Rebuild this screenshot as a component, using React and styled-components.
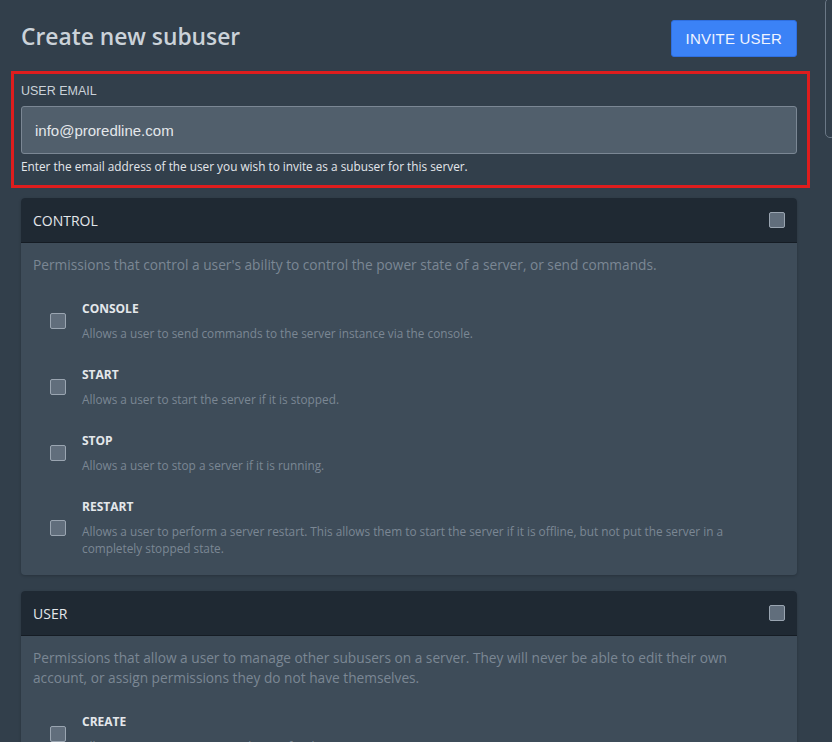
import React from 'react'
import styled, { createGlobalStyle } from 'styled-components'

const GlobalStyle = createGlobalStyle`
	html, body {
		margin: 0;
		padding: 0;
		background: #323f4b;
	}
	body {
		font-family: 'Open Sans', 'Liberation Sans', sans-serif;
		color: #e4e7eb;
	}
	* {
		box-sizing: border-box;
	}
`

const Page = styled.div`
	position: relative;
	min-height: 742px;
	padding: 20px 35px 0 21px;
	overflow: hidden;
`

const ScrollThumb = styled.div`
	position: absolute;
	top: -2px;
	right: -4px;
	width: 11px;
	height: 140px;
	border: 1px solid #6b7886;
	border-radius: 5px;
`

const TopBar = styled.div`
	display: flex;
	justify-content: space-between;
	align-items: flex-start;
`

const Title = styled.h2`
	margin: 1px 0 0;
	font-family: 'Open Sans', sans-serif;
	font-size: 22.8px;
	font-weight: 600;
	color: #cbd2d9;
`

const Button = styled.button`
	height: 37px;
	padding: 0 14px;
	background: #3b82f6;
	border: 1px solid #2f6fe0;
	border-radius: 3px;
	color: #f0f4ff;
	font-family: 'Liberation Sans', Arial, sans-serif;
	font-size: 15px;
	letter-spacing: 0.2px;
`

const Highlight = styled.div`
	margin: 14px -13px 0 -10px;
	padding: 10px 10px 11px 7px;
	border: 3px solid #df1d1d;
`

const Label = styled.label`
	display: block;
	font-family: 'Liberation Sans', Arial, sans-serif;
	font-size: 12.5px;
	color: #cbd2d9;
	margin-bottom: 8px;
`

const Input = styled.input`
	display: block;
	width: 100%;
	height: 48px;
	padding: 0 13px;
	background: #515f6c;
	border: 1px solid #7b8794;
	border-radius: 3px;
	color: #e4e7eb;
	font-family: 'Liberation Sans', Arial, sans-serif;
	font-size: 15px;
	outline: none;
`

const Help = styled.p`
	margin: 4px 0 0;
	font-size: 11.8px;
	color: #e4e7eb;
`

const Card = styled.section`
	margin-top: 10px;
	margin-bottom: 16px;
	border-radius: 4px;
	overflow: hidden;
	background: #3e4c59;
	box-shadow: 0 1px 3px rgba(0, 0, 0, 0.2);
`

const CardHeader = styled.div`
	display: flex;
	align-items: center;
	justify-content: space-between;
	height: 45px;
	padding: 0 12px;
	background: #1f2933;
	border-bottom: 1px solid #151c24;
	font-size: 14px;
	color: #e4e7eb;
`

const CardBody = styled.div`
	padding: 12px 12px 18px;
`

const CardDescription = styled.p`
	margin: 0 40px 25px 0;
	font-size: 13.7px;
	line-height: 20px;
	color: #7b8794;
`

const Checkbox = styled.span`
	display: block;
	flex: none;
	width: 16px;
	height: 16px;
	background: #616e7c;
	border: 1px solid #9aa5b1;
	border-radius: 2px;
`

const Item = styled.div`
	display: flex;
	align-items: center;
	gap: 16px;
	padding: 0 5px 0 17px;
	margin-bottom: 24px;

	&:last-child {
		margin-bottom: 0;
	}
`

const ItemText = styled.div`
	display: flex;
	flex-direction: column;
	gap: 8px;
`

const ItemTitle = styled.span`
	font-size: 12px;
	line-height: 17px;
	font-weight: 700;
	color: #e4e7eb;
`

const ItemDescription = styled.span`
	font-size: 11.8px;
	line-height: 17px;
	color: #7b8794;
`

const groups = [
	{
		name: 'CONTROL',
		description:
			"Permissions that control a user's ability to control the power state of a server, or send commands.",
		items: [
			['CONSOLE', 'Allows a user to send commands to the server instance via the console.'],
			['START', 'Allows a user to start the server if it is stopped.'],
			['STOP', 'Allows a user to stop a server if it is running.'],
			[
				'RESTART',
				'Allows a user to perform a server restart. This allows them to start the server if it is offline, but not put the server in a completely stopped state.'
			]
		]
	},
	{
		name: 'USER',
		description:
			'Permissions that allow a user to manage other subusers on a server. They will never be able to edit their own account, or assign permissions they do not have themselves.',
		items: [['CREATE', 'Allows a user to create new subusers for the server.']]
	}
]

export default function App() {
	return (
		<>
			<GlobalStyle />
			<Page>
				<ScrollThumb />
				<TopBar>
					<Title>Create new subuser</Title>
					<Button>INVITE USER</Button>
				</TopBar>
				<Highlight>
					<Label>USER EMAIL</Label>
					<Input defaultValue="info@proredline.com" />
					<Help>
						Enter the email address of the user you wish to invite as a subuser for this server.
					</Help>
				</Highlight>
				{groups.map(group => (
					<Card key={group.name}>
						<CardHeader>
							{group.name}
							<Checkbox />
						</CardHeader>
						<CardBody>
							<CardDescription>{group.description}</CardDescription>
							{group.items.map(([title, text]) => (
								<Item key={title}>
									<Checkbox />
									<ItemText>
										<ItemTitle>{title}</ItemTitle>
										<ItemDescription>{text}</ItemDescription>
									</ItemText>
								</Item>
							))}
						</CardBody>
					</Card>
				))}
			</Page>
		</>
	)
}
